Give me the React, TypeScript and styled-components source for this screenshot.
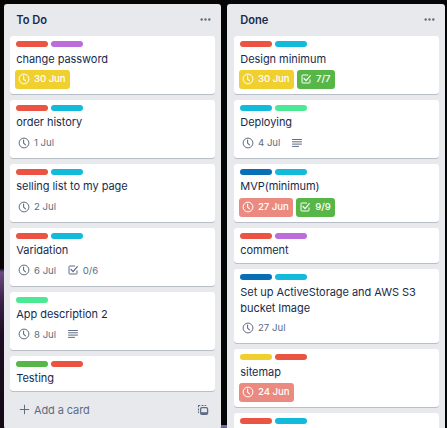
import React from "react";
import styled, { createGlobalStyle } from "styled-components";

const GlobalStyle = createGlobalStyle`
  * { box-sizing: border-box; }
  body {
    margin: 0;
    overflow: hidden;
    background: #050407;
    font-family: Inter, "Liberation Sans", sans-serif;
    color: #172b4d;
  }
`;

const Board = styled.main`
  display: flex;
  align-items: flex-start;
  gap: 6px;
  width: 447px;
  height: 428px;
  padding: 4px 2px 0 4px;
  overflow: hidden;
  background:
    linear-gradient(#1d1124 0, #6b4a80 3px, #5a3a6e 14px, #3a2049 32px, #1d0d22 65px, #120a14 100%) 0 269px / 6px 160px no-repeat,
    linear-gradient(#73679b, #73679b) 220px 425px / 9px 3px no-repeat,
    linear-gradient(90deg, #060405 0 50%, #020607 50%);
`;

const List = styled.section<{ $width: number; $inset: number }>`
  flex: none;
  width: ${(p) => p.$width}px;
  min-height: 424px;
  padding: 0 6px 0 ${(p) => p.$inset}px;
  border-radius: 3px;
  background: #e8e9ed;
`;

const ListHeader = styled.header`
  display: flex;
  align-items: center;
  justify-content: space-between;
  height: 32.2px;
  padding: 0 4.5px 0 6.2px;
`;

const ListTitle = styled.h2`
  margin: 0;
  font-size: 11.1px;
  font-weight: 600;
  line-height: 16px;
`;

const Cards = styled.div`
  display: flex;
  flex-direction: column;
  gap: 6px;
`;

const CardBox = styled.article<{ $compact: boolean }>`
  height: ${(p) => (p.$compact ? "35.45px" : "auto")};
  padding: 5px 6px 3.8px;
  border-radius: 3px;
  background: #fff;
  box-shadow: 0 1px 0 #b9bfc9;
`;

const Labels = styled.div`
  display: flex;
  gap: 3px;
  height: 6px;
  margin-bottom: 2px;
`;

const Label = styled.span<{ $color: string }>`
  width: 32px;
  height: 6px;
  border-radius: 3px;
  background: ${(p) => p.$color};
`;

const CardTitle = styled.div`
  padding: 1.35px 0 0.65px 0.3px;
  font-size: 11px;
  line-height: 16.1px;
  letter-spacing: -0.05px;
`;

const Badges = styled.div`
  display: flex;
  gap: 3px;
  height: 19px;
  margin: 3px 0 1px -1px;
`;

const BadgeBox = styled.span<{ $bg?: string }>`
  display: flex;
  align-items: center;
  gap: 4px;
  height: 19px;
  padding: 0 4.5px 2px 3px;
  border-radius: 3px;
  background: ${(p) => p.$bg ?? "transparent"};
  color: ${(p) => (p.$bg ? "#fff" : "#5e6c84")};
  font-size: 9.6px;
  font-weight: ${(p) => (p.$bg ? 500 : 400)};
  letter-spacing: ${(p) => (p.$bg ? "-0.04px" : "0")};
  line-height: 17px;
  white-space: nowrap;

  svg { flex: none; }
`;

const ListFooter = styled.footer`
  display: flex;
  align-items: center;
  justify-content: space-between;
  height: 37.6px;
  padding: 0 6px 0 9px;
  color: #5e6c84;
  font-size: 11px;
  letter-spacing: -0.1px;
`;

const AddCard = styled.span`
  display: flex;
  align-items: center;
  gap: 4px;
`;

const ClockIcon = () => (
  <svg width="12" height="12" viewBox="0 0 12 12" fill="none" stroke="currentColor">
    <circle cx="6" cy="6" r="4.9" strokeWidth="1" />
    <path d="M5.6 3v3.1l1.9 1.8" strokeWidth="1.1" strokeLinecap="round" strokeLinejoin="round" />
  </svg>
);

const CheckIcon = () => (
  <svg width="12" height="12" viewBox="0 0 12 12" fill="none" stroke="currentColor" strokeLinecap="round" strokeLinejoin="round">
    <path d="M7.7 2H2.6Q2 2 2 2.6v6.8q0 .6.6.6h6.8q.6 0 .6-.6V6.8" />
    <path d="M4 5.5l2.1 2.1 4.2-4.9" strokeWidth="1.2" />
  </svg>
);

const TextIcon = () => (
  <svg width="12" height="12" viewBox="0 0 12 12" fill="none" stroke="currentColor" strokeLinecap="round">
    <path d="M1.5 2.5h9M1.5 4.8h9M1.5 7.1h9M1.5 9.4h6" />
  </svg>
);

const MoreIcon = () => (
  <svg width="11" height="4" viewBox="0 0 11 4" fill="#5e6c84">
    <circle cx="1.7" cy="1.5" r="1.2" />
    <circle cx="5.5" cy="1.5" r="1.2" />
    <circle cx="9.3" cy="1.5" r="1.2" />
  </svg>
);

const PlusIcon = () => (
  <svg width="11" height="11" viewBox="0 0 11 11" stroke="currentColor" strokeLinecap="round">
    <path d="M5.5 1.2v8.6M1.2 5.5h8.6" />
  </svg>
);

const TemplateIcon = () => (
  <svg width="12" height="12" viewBox="0 0 12 12" fill="none" stroke="currentColor">
    <path d="M1.5 9v-1.5M1.5 6.5v-2M1.5 3.2V1.5h1.7M4.5 1.5h2M7.6 1.5h1.6" strokeWidth="1.1" />
    <rect x="3.6" y="3.6" width="7" height="6.8" rx="1.4" strokeWidth="1.3" />
    <path d="M4 9.2h6.2" strokeWidth="2" />
  </svg>
);

const palette = {
  red: "#eb5442",
  purple: "#bd6ddb",
  sky: "#12bbdc",
  lime: "#4be993",
  blue: "#086fb7",
  green: "#57b648",
  yellow: "#f0d02f",
  late: "#ea8a80",
};

type Color = keyof typeof palette;
type BadgeKind = "date" | "check" | "text";
type BadgeData = { kind: BadgeKind; text?: string; bg?: Color };
type CardData = { labels: Color[]; title: string; badges?: BadgeData[] };

const icons: Record<BadgeKind, React.FC> = { date: ClockIcon, check: CheckIcon, text: TextIcon };

const date = (text: string, bg?: Color): BadgeData => ({ kind: "date", text, bg });
const check = (text: string, bg?: Color): BadgeData => ({ kind: "check", text, bg });
const description: BadgeData = { kind: "text" };

const todo: CardData[] = [
  { labels: ["red", "purple"], title: "change password", badges: [date("30 Jun", "yellow")] },
  { labels: ["red", "sky"], title: "order history", badges: [date("1 Jul")] },
  { labels: ["red", "sky"], title: "selling list to my page", badges: [date("2 Jul")] },
  { labels: ["red", "sky"], title: "Varidation", badges: [date("6 Jul"), check("0/6")] },
  { labels: ["lime"], title: "App description 2", badges: [date("8 Jul"), description] },
  { labels: ["green", "red"], title: "Testing" },
];

const done: CardData[] = [
  { labels: ["red", "sky"], title: "Design minimum", badges: [date("30 Jun", "yellow"), check("7/7", "green")] },
  { labels: ["sky", "lime"], title: "Deploying", badges: [date("4 Jul"), description] },
  { labels: ["blue", "sky"], title: "MVP(minimum)", badges: [date("27 Jun", "late"), check("9/9", "green")] },
  { labels: ["red", "purple"], title: "comment" },
  { labels: ["blue", "sky"], title: "Set up ActiveStorage and AWS S3 bucket Image", badges: [date("27 Jul")] },
  { labels: ["yellow", "red"], title: "sitemap", badges: [date("24 Jun", "late")] },
  { labels: ["red", "sky"], title: "" },
];

const Badge = ({ kind, text, bg }: BadgeData) => {
  const Icon = icons[kind];
  return (
    <BadgeBox $bg={bg && palette[bg]}>
      <Icon />
      {text}
    </BadgeBox>
  );
};

const Card = ({ labels, title, badges }: CardData) => (
  <CardBox $compact={!badges}>
    <Labels>
      {labels.map((c) => (
        <Label key={c} $color={palette[c]} />
      ))}
    </Labels>
    <CardTitle>{title}</CardTitle>
    {badges && (
      <Badges>
        {badges.map((b) => (
          <Badge key={b.kind} {...b} />
        ))}
      </Badges>
    )}
  </CardBox>
);

type ColumnProps = { title: string; cards: CardData[]; width: number; inset: number; footer?: boolean };

const Column = ({ title, cards, width, inset, footer }: ColumnProps) => (
  <List $width={width} $inset={inset}>
    <ListHeader>
      <ListTitle>{title}</ListTitle>
      <MoreIcon />
    </ListHeader>
    <Cards>
      {cards.map((card, i) => (
        <Card key={i} {...card} />
      ))}
    </Cards>
    {footer && (
      <ListFooter>
        <AddCard>
          <PlusIcon />
          Add a card
        </AddCard>
        <TemplateIcon />
      </ListFooter>
    )}
  </List>
);

export default function App() {
  return (
    <>
      <GlobalStyle />
      <Board>
        <Column title="To Do" cards={todo} width={217} inset={6} footer />
        <Column title="Done" cards={done} width={218} inset={7} />
      </Board>
    </>
  );
}
